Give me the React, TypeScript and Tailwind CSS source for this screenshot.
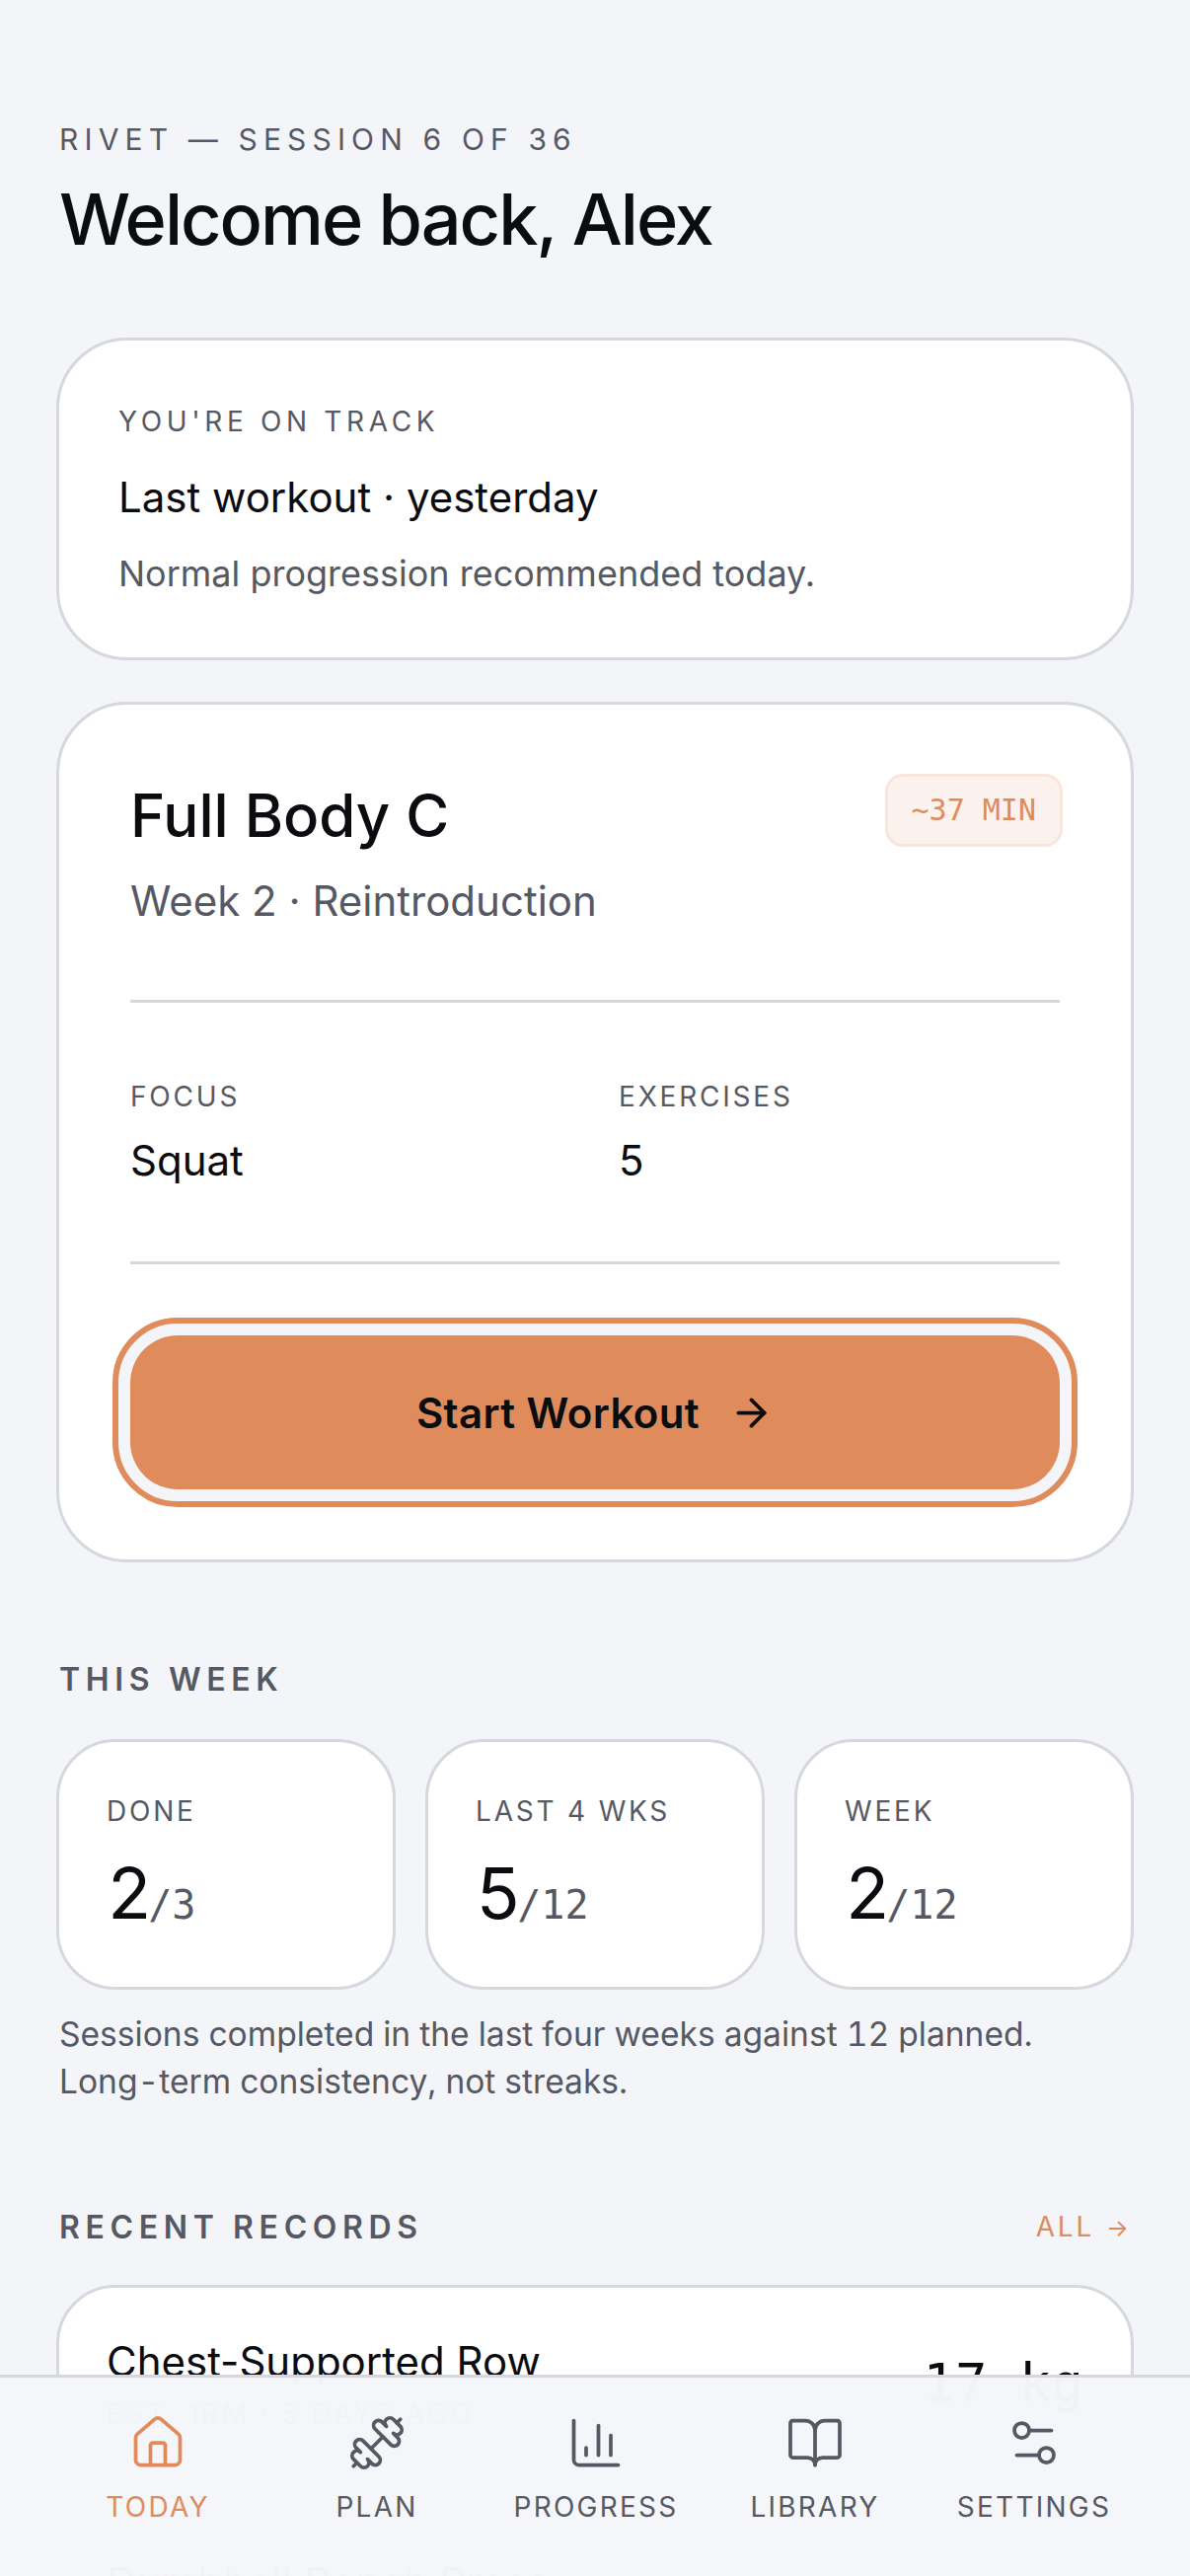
import { ArrowRight, BookOpen, ChartColumn, Dumbbell, House, Settings2 } from 'lucide-react';

const stats = [
  { label: 'DONE', value: '2', total: '/3' },
  { label: 'LAST 4 WKS', value: '5', total: '/12' },
  { label: 'WEEK', value: '2', total: '/12' },
];

const records = [
  { name: 'Chest-Supported Row', meta: 'EST. 1RM · 5 DAYS AGO', weight: '17 kg' },
  { name: 'Dumbbell Bench Press', meta: 'EST. 1RM · 5 DAYS AGO', weight: '24 kg' },
];

const tabs = [
  { label: 'TODAY', Icon: House, active: true },
  { label: 'PLAN', Icon: Dumbbell },
  { label: 'PROGRESS', Icon: ChartColumn },
  { label: 'LIBRARY', Icon: BookOpen },
  { label: 'SETTINGS', Icon: Settings2 },
];

export default function App() {
  return (
    <div className="relative h-[2610px] overflow-hidden bg-[#f4f5f9] font-['Inter',sans-serif] text-[#0b0c10]">
      <main className="px-[57px] pt-[123px]">
        <header className="px-[3px]">
          <p className="text-[30px] leading-[36px] tracking-[0.205em] text-[#565963]">RIVET — SESSION 6 OF 36</p>
          <h1 className="mt-[20px] text-[72px] leading-[86px] font-medium tracking-[-2px]">Welcome back, Alex</h1>
        </header>

        <section className="mt-[77px] rounded-[72px] border-[3px] border-[#d6d8de] bg-white px-[60px] pt-[65px] pb-[61px]">
          <p className="text-[28px] leading-[34px] tracking-[0.166em] text-[#565963]">YOU'RE ON TRACK</p>
          <p className="mt-[34px] text-[42px] leading-[52px]">Last workout · yesterday</p>
          <p className="mt-[27px] text-[36px] leading-[48px] text-[#565963]">Normal progression recommended today.</p>
        </section>

        <section className="mt-[42px] rounded-[72px] border-[3px] border-[#d6d8de] bg-white px-[72px] pt-[76px] pb-[56px]">
          <div className="flex items-start justify-between">
            <div>
              <h2 className="text-[60px] leading-[72px] font-medium">Full Body C</h2>
              <p className="mt-[24px] text-[42px] leading-[54px] text-[#565963]">Week 2 · Reintroduction</p>
            </div>
            <span className="mt-[-6px] mr-[-3px] rounded-[18px] border-[3px] border-[#f8e6dc] bg-[#fcf2ed] px-[24px] py-[16px] font-['DejaVu_Sans_Mono',monospace] text-[30px] leading-[36px] text-[#df8b5c]">~37 MIN</span>
          </div>
          <div className="mt-[73px] grid grid-cols-2 gap-[48px] border-y-[3px] border-[#d6d8de] pt-[78px] pb-[76px]">
            <div>
              <p className="text-[28px] leading-[34px] tracking-[0.1em] text-[#565963]">FOCUS</p>
              <p className="mt-[22px] text-[42px] leading-[52px]">Squat</p>
            </div>
            <div>
              <p className="text-[28px] leading-[34px] tracking-[0.1em] text-[#565963]">EXERCISES</p>
              <p className="mt-[22px] text-[42px] leading-[52px]">5</p>
            </div>
          </div>
          <button className="mt-[72px] mb-[15px] flex h-[156px] w-full items-center justify-center gap-[30px] rounded-[48px] bg-[#df8b5c] text-[42px] font-semibold tracking-[0.4px] outline-[6px] outline-offset-[12px] outline-[#df8b5c] ring-[12px] ring-[#f4f5f9]">
            Start Workout
            <ArrowRight size={45} strokeWidth={2} />
          </button>
        </section>

        <section className="mt-[99px]">
          <h3 className="px-[3px] text-[32px] leading-[40px] font-semibold tracking-[0.176em] text-[#565963]">THIS WEEK</h3>
          <div className="mt-[40px] grid grid-cols-3 gap-[30px]">
            {stats.map((stat) => (
              <div key={stat.label} className="rounded-[60px] border-[3px] border-[#d6d8de] bg-white px-[48px] pt-[53px] pb-[41px]">
                <p className="text-[28px] leading-[34px] tracking-[0.1em] text-[#565963]">{stat.label}</p>
                <p className="mt-[24px] flex items-baseline leading-[84px] tabular-nums">
                  <span className="text-[72px] tracking-[-0.02em]">{stat.value}</span>
                  <span className="ml-[-3px] font-['DejaVu_Sans_Mono',monospace] text-[40px] text-[#565963]">{stat.total}</span>
                </p>
              </div>
            ))}
          </div>
          <p className="mt-[21px] px-[3px] text-[33.6px] leading-[48px] text-[#565963] tabular-nums">
            Sessions completed in the last four weeks against 12 planned.
            <br />
            Long-term consistency, not streaks.
          </p>
        </section>

        <section className="mt-[104px]">
          <div className="flex items-center justify-between pr-[5px] pl-[3px]">
            <h3 className="text-[32px] leading-[40px] font-semibold tracking-[0.176em] text-[#565963]">RECENT RECORDS</h3>
            <a className="flex items-baseline gap-[12px] text-[28px] leading-[34px] tracking-[0.1em] text-[#df8b5c]">
              ALL
              <span className="text-[24px] tracking-normal">→</span>
            </a>
          </div>
          <div className="mt-[38px] flex flex-col gap-[24px]">
            {records.map((record) => (
              <div key={record.name} className="flex items-center justify-between rounded-[60px] border-[3px] border-[#d6d8de] bg-white px-[48px] py-[49px]">
                <div>
                  <p className="text-[42px] leading-[52px]">{record.name}</p>
                  <p className="mt-[10px] text-[28px] leading-[34px] tracking-[0.1em] text-[#565963]">{record.meta}</p>
                </div>
                <p className="font-['DejaVu_Sans_Mono',monospace] text-[54px] leading-[66px]">{record.weight}</p>
              </div>
            ))}
          </div>
        </section>
      </main>

      <nav className="absolute inset-x-0 bottom-0 grid h-[204px] grid-cols-5 items-start border-t-[3px] border-[#d6d8de] bg-[#f5f6fa]/[0.985] pt-[36px] pr-[47px] pl-[49px]">
        {tabs.map(({ label, Icon, active }) => (
          <div key={label} className={`flex flex-col items-center gap-[18px] ${active ? 'text-[#df8b5c]' : 'text-[#565963]'}`}>
            <Icon size={60} strokeWidth={1.5} />
            <span className="text-[28px] leading-[34px] tracking-[0.08em]">{label}</span>
          </div>
        ))}
      </nav>
    </div>
  );
}
